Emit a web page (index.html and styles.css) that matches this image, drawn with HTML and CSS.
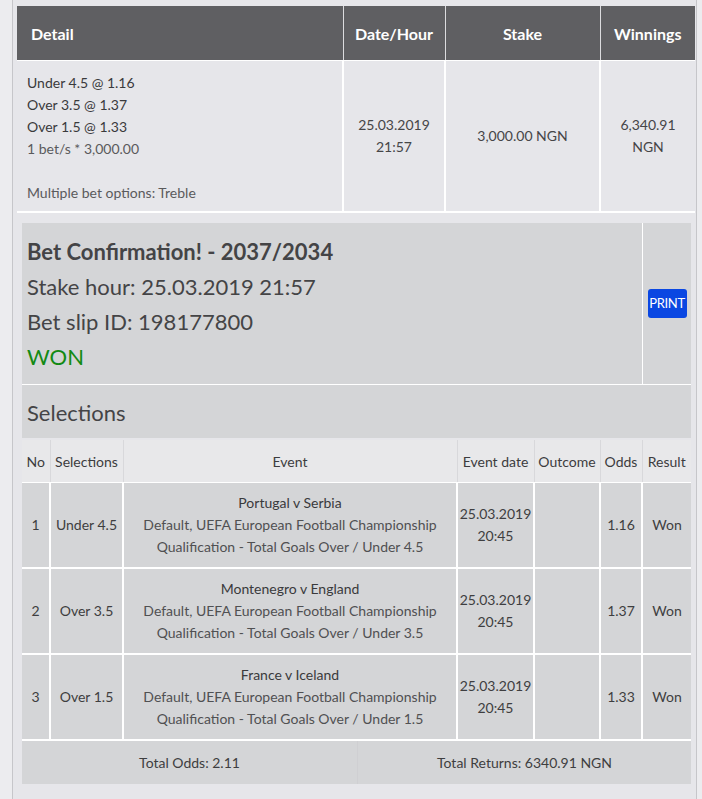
FILE: index.html
```html
<!DOCTYPE html>
<html>
<head>
<meta charset="utf-8">
<link rel="stylesheet" href="styles.css">
</head>
<body>
<div class="wrap">
  <table class="summary">
    <colgroup>
      <col class="c-detail"><col class="c-date"><col class="c-stake"><col class="c-win">
    </colgroup>
    <thead>
      <tr><th class="left">Detail</th><th>Date/Hour</th><th>Stake</th><th>Winnings</th></tr>
    </thead>
    <tbody>
      <tr>
        <td class="detail">
          <div>Under 4.5 @ 1.16</div>
          <div>Over 3.5 @ 1.37</div>
          <div>Over 1.5 @ 1.33</div>
          <div class="muted">1 bet/s * 3,000.00</div>
          <div>&nbsp;</div>
          <div class="muted">Multiple bet options: Treble</div>
        </td>
        <td>25.03.2019<br>21:57</td>
        <td>3,000.00 NGN</td>
        <td>6,340.91<br>NGN</td>
      </tr>
    </tbody>
  </table>

  <div class="panel">
    <div class="confirm">
      <div class="confirm-text">
        <div class="title">Bet Confirmation! - 2037/2034</div>
        <div>Stake hour: 25.03.2019 21:57</div>
        <div>Bet slip ID: 198177800</div>
        <div class="won">WON</div>
      </div>
      <div class="print-cell"><span class="print">PRINT</span></div>
    </div>
    <div class="sel-title">Selections</div>
    <table class="sel">
      <colgroup>
        <col class="s-no"><col class="s-sel"><col class="s-event"><col class="s-date"><col class="s-out"><col class="s-odds"><col class="s-res">
      </colgroup>
      <thead>
        <tr><th>No</th><th>Selections</th><th>Event</th><th>Event date</th><th>Outcome</th><th>Odds</th><th>Result</th></tr>
      </thead>
      <tbody>
        <tr>
          <td>1</td><td>Under 4.5</td>
          <td class="event"><div class="ev-name">Portugal v Serbia</div><div>Default, UEFA European Football Championship</div><div>Qualification - Total Goals Over / Under 4.5</div></td>
          <td>25.03.2019<br>20:45</td><td></td><td>1.16</td><td>Won</td>
        </tr>
        <tr>
          <td>2</td><td>Over 3.5</td>
          <td class="event"><div class="ev-name">Montenegro v England</div><div>Default, UEFA European Football Championship</div><div>Qualification - Total Goals Over / Under 3.5</div></td>
          <td>25.03.2019<br>20:45</td><td></td><td>1.37</td><td>Won</td>
        </tr>
        <tr>
          <td>3</td><td>Over 1.5</td>
          <td class="event"><div class="ev-name">France v Iceland</div><div>Default, UEFA European Football Championship</div><div>Qualification - Total Goals Over / Under 1.5</div></td>
          <td>25.03.2019<br>20:45</td><td></td><td>1.33</td><td>Won</td>
        </tr>
      </tbody>
    </table>
    <div class="totals">
      <div class="tot tot-left">Total Odds: 2.11</div>
      <div class="tot">Total Returns: 6340.91 NGN</div>
    </div>
  </div>
</div>
</body>
</html>
```
FILE: styles.css
```css
html, body {
  margin: 0;
  padding: 0;
  background: #ececef;
  font-family: Lato, "Open Sans", sans-serif;
  color: #3c3c3e;
}
.wrap {
  margin-left: 12px;
  width: 678px;
  min-height: 793px;
  padding: 6px 1px 0 4px;
  background: #e6e6ea;
  border-left: 1px solid #c6c6ca;
  border-right: 1px solid #c6c6ca;
}
table {
  border-collapse: collapse;
  table-layout: fixed;
}
.summary {
  width: 678px;
}
.c-detail { width: 326px; }
.c-date { width: 102px; }
.c-stake { width: 155px; }
.c-win { width: 95px; }
.summary th {
  height: 54px;
  padding: 0;
  background: #5f5f62;
  color: #fff;
  font-size: 16px;
  font-weight: 700;
  text-align: center;
  border-left: 1px solid #dcdcdf;
  border-bottom: 1px solid #fff;
}
.summary th:first-child { border-left: none; }
.summary th.left {
  text-align: left;
  padding-left: 14px;
}
.summary td {
  padding: 0;
  text-align: center;
  vertical-align: middle;
  font-size: 14px;
  line-height: 22px;
  color: #454547;
  border-left: 2px solid #fff;
  border-bottom: 2px solid #fff;
}
.summary td:first-child { border-left: none; }
.summary td.detail {
  text-align: left;
  padding: 11px 10px 7px 10px;
  color: #3a3a3c;
}
.summary .muted { color: #5a5a5c; }

.panel {
  margin: 10px 4px 0 5px;
  background: #d4d5d7;
}
.confirm {
  display: flex;
  border-bottom: 1px solid #fff;
}
.confirm-text {
  flex: 1;
  padding: 11px 5px 10px 5px;
  font-size: 22px;
  line-height: 35px;
  color: #444446;
  border-right: 1px solid #fff;
}
.confirm-text .title {
  font-weight: 700;
}
.confirm-text .won {
  color: #138a13;
}
.print-cell {
  width: 48px;
  display: flex;
  align-items: center;
  justify-content: center;
}
.print {
  display: block;
  width: 39px;
  height: 29px;
  line-height: 29px;
  text-align: center;
  background: #0a47e2;
  color: #fff;
  border-radius: 3px;
  font-size: 13px;
  letter-spacing: -0.3px;
}
.sel-title {
  height: 53px;
  line-height: 56px;
  padding-left: 5px;
  font-size: 22px;
  color: #444446;
  border-bottom: 2px solid #e6e6ea;
}
.sel {
  width: 669px;
}
.s-no { width: 28px; }
.s-sel { width: 73px; }
.s-event { width: 334px; }
.s-date { width: 77px; }
.s-out { width: 66px; }
.s-odds { width: 42px; }
.s-res { width: 49px; }
.sel th {
  height: 42px;
  padding: 0;
  background: #e8e8ea;
  font-weight: 400;
  font-size: 14px;
  color: #3c3c3e;
  border-left: 1px solid #d8d8db;
  border-bottom: 1px solid #fff;
}
.sel th:first-child { border-left: none; }
.sel td {
  height: 84px;
  padding: 0;
  text-align: center;
  vertical-align: middle;
  font-size: 14px;
  line-height: 22px;
  color: #3e3e40;
  border-left: 2px solid #fff;
  border-bottom: 2px solid #fff;
}
.sel td:first-child { border-left: none; }
.sel td.event { color: #505052; }
.sel td.event .ev-name { color: #3a3a3c; }
.totals {
  display: flex;
  height: 43px;
}
.tot {
  flex: 1;
  display: flex;
  align-items: center;
  justify-content: center;
  font-size: 14px;
  color: #3e3e40;
}
.tot-left {
  flex: 0 0 335px;
  border-right: 1px solid #cfcfd2;
}
```
